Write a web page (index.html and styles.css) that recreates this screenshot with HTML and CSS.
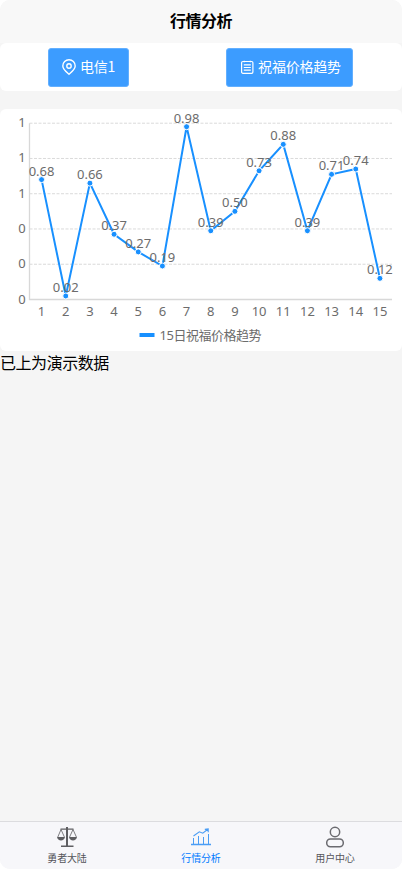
FILE: index.html
```html
<!DOCTYPE html>
<html lang="zh-CN">
<head>
<meta charset="utf-8">
<meta name="viewport" content="width=device-width, initial-scale=1">
<title>行情分析</title>
<link rel="stylesheet" href="styles.css">
</head>
<body>
<div class="page">
  <header class="navbar"><h1>行情分析</h1></header>
  <main class="content">
    <section class="card filters">
      <div class="cell"><button class="btn">
        <svg width="16" height="18" viewBox="0 0 16 18" fill="none" stroke="#fff" stroke-width="1.4"><path d="M8 16.300C4.500 13.200 1.800 11 1.800 7.900a6.200 6.200 0 0 1 12.400 0C14.200 11 11.500 13.200 8 16.300Z"/><circle cx="8" cy="8" r="2.200"/></svg>
        <span>电信1</span></button></div>
      <div class="cell"><button class="btn">
        <svg width="16" height="18" viewBox="0 0 16 18" fill="none" stroke="#fff" stroke-width="1.200"><rect x="2.600" y="3.500" width="11.300" height="11.800" rx="1.300"/><path d="M4.800 6.900h7M4.800 9.500h7M4.800 12.100h7M5.200 2.800v1.400M11.300 2.800v1.400"/></svg>
        <span>祝福价格趋势</span></button></div>
    </section>
    <section class="card chart"><svg id="chart" width="402" height="242" viewBox="0 0 402 242"></svg></section>
    <p class="note">已上为演示数据</p>
  </main>
  <nav class="tabbar">
    <a class="tab">
      <svg width="24" height="24" viewBox="0 0 24 24" fill="none" stroke="#5f5f62" stroke-width=".8"><path d="M12 2v19" stroke-width="2"/><path d="M5.500 4.200h13" stroke-width="1.300"/><path d="M6 21.200h12.500" stroke-width="1.500"/><path d="M6 4.500 2.800 12M6 4.500 9.400 12M18 4.500 14.600 12M18 4.500l3.400 7.500"/><path d="M2 12h8c-.4 2.300-2 3.500-4 3.500S2.400 14.300 2 12ZM14 12h8c-.4 2.300-2 3.500-4 3.500s-3.600-1.200-4-3.500Z" fill="#5f5f62" stroke="none"/></svg>
      <span>勇者大陆</span></a>
    <a class="tab active">
      <svg width="24" height="24" viewBox="0 0 24 24" fill="none" stroke="#4a9df5" stroke-width="1"><path d="M2 19.500h20" stroke-width="1.300"/><path d="M4.500 19V13M9.500 19v-8M14.500 19v-7M19.500 19V9"/><path d="m4.500 11 5.800-4.200 3.500 1.400 5-4M15.800 4.400l3.400-.5v3.400" stroke-width="1.100"/></svg>
      <span>行情分析</span></a>
    <a class="tab">
      <svg width="24" height="24" viewBox="0 0 24 24" fill="none" stroke="#6b6b70" stroke-width="1.500"><circle cx="12" cy="7" r="4.700"/><rect x="3.700" y="14" width="16.600" height="7.800" rx="3.700"/></svg>
      <span>用户中心</span></a>
  </nav>
</div>
<script src="chart.js"></script>
</body>
</html>
```
FILE: styles.css
```css
* { box-sizing: border-box; }
body { margin: 0; background: #fff; font-family: "Noto Sans", "Noto Sans CJK SC", sans-serif; color: #000; }
.page { height: 869px; display: flex; flex-direction: column; background: #f5f5f5; border-radius: 10px; overflow: hidden; }
.navbar { height: 43px; flex: none; display: flex; align-items: center; justify-content: center; background: #f8f8f8; padding-bottom: 1px; }
.navbar h1 { margin: 0; font-size: 16px; font-weight: 600; line-height: 24px; letter-spacing: -0.5px; }
.content { flex: 1; }
.card { background: #fff; border-radius: 6px; }
.filters { height: 48px; display: flex; align-items: center; margin-bottom: 18px; }
.cell { display: flex; justify-content: center; }
.cell:first-child { width: 177px; }
.cell:last-child { width: 225px; }
.btn { height: 39px; padding: 0 11px 1px 12px; display: flex; align-items: center; gap: 3px; border: 1px solid #62afff; border-radius: 3px; background: #3c9cff; color: #fff; font: 14px "Noto Sans CJK SC", sans-serif; white-space: nowrap; }
.btn span { letter-spacing: -0.2px; padding-bottom: 2px; }
.cell:first-child .btn { width: 81px; }
.chart { height: 242px; }
.chart svg { display: block; font-family: "Noto Sans", "Noto Sans CJK SC", sans-serif; }
.grid { stroke: #dadada; stroke-dasharray: 3 1.500; }
.axis { stroke: #d8d8d8; stroke-width: 1.300; fill: none; }
.line { stroke: #1890ff; stroke-width: 2; fill: none; }
.dot { fill: #1890ff; stroke: #fff; stroke-width: 1; }
.label { fill: #6c6c6c; font-size: 13px; text-anchor: middle; }
.legend { fill: #6c6c6c; font-size: 13px; }
.note { margin: 0; font-size: 16px; line-height: 24px; letter-spacing: -0.45px; }
.tabbar { height: 48px; flex: none; display: flex; background: #f7f7fa; border-top: 1px solid #dcdcdf; }
.tab { flex: 1; display: flex; flex-direction: column; align-items: center; padding-top: 3px; font-size: 10px; line-height: 14px; color: #55555a; }
.tab svg { display: block; margin-bottom: 2px; }
.tab span { letter-spacing: -0.15px; }
.tab.active { color: #007aff; }
```
FILE: chart.js
```js
const values = [0.68, 0.02, 0.66, 0.37, 0.27, 0.19, 0.98, 0.39, 0.50, 0.73, 0.88, 0.39, 0.71, 0.74, 0.12];
const left = 29.5, right = 392, top0 = 14.2, bottom = 190.5;
const step = (right - left) / values.length;
const x = i => left + step * (i + 0.5);
const y = v => bottom - v * (bottom - top0);
let out = '';
['0', '0', '0', '1', '1', '1'].forEach((t, i) => {
  const gy = bottom - i * (bottom - top0) / 5;
  if (i) out += `<line class="grid" x1="${left}" x2="${right}" y1="${gy}" y2="${gy}"/>`;
  out += `<text class="label" x="22" y="${gy + 4}">${t}</text>`;
});
out += `<path class="axis" d="M${left} ${top0}V${bottom}H${right}"/>`;
out += `<polyline class="line" points="${values.map((v, i) => x(i) + ',' + y(v)).join(' ')}"/>`;
values.forEach((v, i) => {
  out += `<circle class="dot" cx="${x(i)}" cy="${y(v)}" r="3"/>`;
  out += `<text class="label" x="${x(i)}" y="207">${i + 1}</text>`;
});
values.forEach((v, i) => {
  out += `<text class="label" x="${x(i)}" y="${y(v) - 4}">${v.toFixed(2)}</text>`;
});
out += '<rect x="139.5" y="224" width="15" height="4" fill="#1890ff"/><text class="legend" x="159.5" y="230.5" textLength="102">15日祝福价格趋势</text>';
document.getElementById('chart').innerHTML = out;
```
